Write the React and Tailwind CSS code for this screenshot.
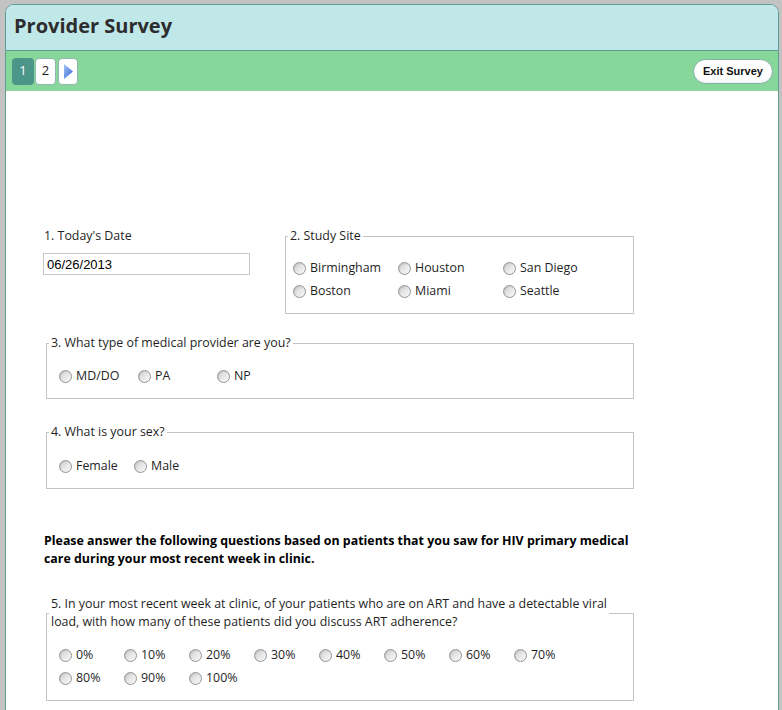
const sites = [['Birmingham', 'Houston', 'San Diego'], ['Boston', 'Miami', 'Seattle']]
const pcts = [['0%', '10%', '20%', '30%', '40%', '50%', '60%', '70%'], ['80%', '90%', '100%']]

function Radio({ label, width }) {
  return (
    <label className="flex items-center gap-[4px] h-[23px] shrink-0" style={{ width }}>
      <span className="w-[13px] h-[13px] rounded-full border border-[#949494] bg-linear-to-br from-[#cfcfcf] via-[#e6e6e6] to-[#fbfbfb] shadow-[inset_1px_1px_1px_rgba(0,0,0,0.08)]" />
      <span>{label}</span>
    </label>
  )
}

function Fieldset({ legend, className, children, legendClass = 'leading-[16px]' }) {
  return (
    <fieldset className={`border border-[#c4c4c4] pb-[10px] ${className}`}>
      <legend className={`ml-[2px] px-[2px] ${legendClass}`}>{legend}</legend>
      {children}
    </fieldset>
  )
}

export default function App() {
  return (
    <div className="w-[782px] h-[710px] overflow-hidden bg-[#c3c3c3] pt-[4px] pl-[5px] pr-[3px] font-['Open_Sans',sans-serif] text-[12.4px] text-[#1f1f1f]">
      <div className="h-[720px] bg-white border border-[#5c9c93] rounded-t-[9px] overflow-hidden">
        <div className="h-[46px] bg-[#c0e8e9] border-b border-[#5c9c93] flex items-center pl-[8px] pb-[4px]">
          <h1 className="text-[20px] font-bold text-[#2d2d2d]">Provider Survey</h1>
        </div>
        <div className="h-[40px] bg-[#87d69a] flex items-center justify-between pl-[6px] pr-[5px]">
          <div className="flex gap-[1px]">
            <button className="w-[22px] h-[27px] rounded-[4px] bg-[#4b9689] text-white text-[13px] flex items-center justify-center">1</button>
            <button className="w-[21px] h-[27px] rounded-[4px] bg-white border border-[#8fb7ae] text-[13px] flex items-center justify-center">2</button>
            <button className="ml-[1px] w-[20px] h-[27px] rounded-[4px] bg-white border border-[#8fb7ae] flex items-center justify-center">
              <svg width="9" height="15" viewBox="0 0 9 15">
                <defs>
                  <linearGradient id="tri" x1="0" y1="0" x2="1" y2="1">
                    <stop offset="0" stopColor="#a9c6f5" />
                    <stop offset="1" stopColor="#2f63d6" />
                  </linearGradient>
                </defs>
                <polygon points="0,0 9,7.5 0,15" fill="url(#tri)" />
              </svg>
            </button>
          </div>
          <button className="w-[80px] h-[25px] rounded-full bg-white border border-[#7fb0a5] text-[11px] font-bold text-[#111] font-['Liberation_Sans',sans-serif] shadow-[inset_0_-2px_3px_rgba(0,0,0,0.06)]">
            Exit Survey
          </button>
        </div>

        <div className="pt-[137px] pl-[37px]">
          <div className="flex">
            <div className="w-[242px]">
              <div className="leading-[16px] pl-[1px]">1. Today's Date</div>
              <input
                readOnly
                value="06/26/2013"
                className="mt-[9px] w-[207px] h-[22px] border border-[#c8c8c8] px-[3px] text-[13px] font-['Liberation_Sans',sans-serif] text-black outline-none"
              />
            </div>
            <Fieldset legend="2. Study Site" className="w-[349px]">
              <div className="pt-[13px] pl-[7px]">
                {sites.map((row, i) => (
                  <div key={i} className="flex">
                    {row.map((s) => <Radio key={s} label={s} width="105px" />)}
                  </div>
                ))}
              </div>
            </Fieldset>
          </div>

          <Fieldset legend="3. What type of medical provider are you?" className="mt-[21px] ml-[3px] w-[588px]">
            <div className="pt-[14px] pl-[12px] flex">
              <Radio label="MD/DO" width="79px" />
              <Radio label="PA" width="79px" />
              <Radio label="NP" width="79px" />
            </div>
          </Fieldset>

          <Fieldset legend="4. What is your sex?" className="mt-[25px] ml-[3px] w-[588px]">
            <div className="pt-[15px] pl-[12px] flex">
              <Radio label="Female" width="75px" />
              <Radio label="Male" width="75px" />
            </div>
          </Fieldset>

          <p className="mt-[43px] pl-[1px] w-[620px] font-bold leading-[18px] text-black">
            Please answer the following questions based on patients that you saw for HIV primary medical
            <br />
            care during your most recent week in clinic.
          </p>

          <Fieldset
            legend={<>5. In your most recent week at clinic, of your patients who are on ART and have a detectable viral<br />load, with how many of these patients did you discuss ART adherence?</>}
            legendClass="leading-[18px]"
            className="mt-[27px] ml-[3px] w-[588px]"
          >
            <div className="pt-[13px] pl-[12px]">
              {pcts.map((row, i) => (
                <div key={i} className="flex">
                  {row.map((p) => <Radio key={p} label={p} width="65px" />)}
                </div>
              ))}
            </div>
          </Fieldset>
        </div>
      </div>
    </div>
  )
}
